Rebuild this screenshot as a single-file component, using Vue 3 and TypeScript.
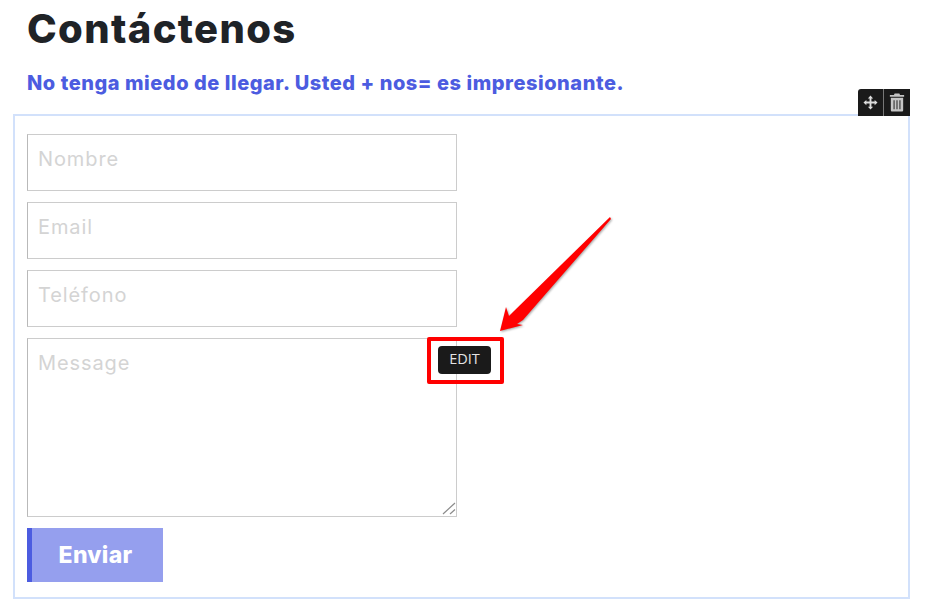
<script setup lang="ts">
const fields = ['Nombre', 'Email', 'Teléfono']
</script>

<template>
  <div class="page">
    <h1 class="title">Contáctenos</h1>
    <p class="subtitle">No tenga miedo de llegar. Usted + nos= es impresionante.</p>

    <section class="editor-box">
      <div class="toolbar">
        <span class="tool">
          <svg width="15" height="15" viewBox="0 0 16 16" fill="#dedede">
            <path d="M8 0.5 10.8 3.6H9V7H12.4V5.2L15.5 8 12.4 10.8V9H9V12.4H10.8L8 15.5 5.2 12.4H7V9H3.6V10.8L0.5 8 3.6 5.2V7H7V3.6H5.2Z" />
          </svg>
        </span>
        <span class="tool tool-trash">
          <svg width="16" height="19" viewBox="0 0 16 20" fill="#c6c6c6">
            <path d="M5.5 0.5H10.5L11.2 2H15.5V4H0.5V2H4.8ZM1.5 5H14.5V18.2C14.5 19 13.9 19.5 13.2 19.5H2.8C2.1 19.5 1.5 19 1.5 18.2ZM4.4 7.5V17H5.4V7.5ZM7.5 7.5V17H8.5V7.5ZM10.6 7.5V17H11.6V7.5Z" />
          </svg>
        </span>
      </div>

      <form class="contact-form" @submit.prevent>
        <input v-for="field in fields" :key="field" class="field" type="text" :placeholder="field" />
        <div class="message-wrap">
          <textarea class="field message" placeholder="Message"></textarea>
          <svg class="grip" width="14" height="14" viewBox="0 0 14 14" stroke="#8c8c8c" stroke-width="1.2" fill="none">
            <path d="M1 13 13 2M8 13 13 8.5" />
          </svg>
          <button type="button" class="edit-button">EDIT</button>
          <span class="edit-highlight"></span>
        </div>
        <button type="submit" class="send-button">Enviar</button>
      </form>
    </section>

    <!-- red annotation arrow pointing at the edit button -->
    <svg class="arrow" width="928" height="604" viewBox="0 0 928 604">
      <polygon points="610,217 611,219 523,320 517,324 523,325 500,331 506,307 509,316 513,312" fill="#ff0000" />
    </svg>
  </div>
</template>

<style>
html,
body {
  margin: 0;
  background: #fff;
}
</style>

<style scoped>
.page {
  position: relative;
  width: 928px;
  height: 604px;
  overflow: hidden;
  box-sizing: border-box;
  padding: 6px 18px 0 13px;
  font-family: Inter, "Liberation Sans", sans-serif;
}

.title {
  margin: 0 0 0 14px;
  font-size: 40px;
  line-height: 46px;
  font-weight: 800;
  letter-spacing: 1.35px;
  color: #1f2327;
}

.subtitle {
  margin: 17px 0 0 14px;
  font-size: 20px;
  line-height: 28px;
  font-weight: 800;
  letter-spacing: 0.54px;
  color: #4c5ce0;
}

.editor-box {
  position: relative;
  box-sizing: border-box;
  margin-top: 17px;
  height: 485px;
  border: 2px solid #d2e1fb;
  padding: 18px 12px;
}

.toolbar {
  position: absolute;
  top: -27px;
  right: -2px;
  display: flex;
  height: 27px;
  background: #1a1a1a;
  border-radius: 3px 0 0 0;
}

.tool {
  display: flex;
  align-items: center;
  justify-content: center;
  width: 25px;
}

.tool-trash {
  width: 26px;
  border-left: 1px solid #777;
}

.contact-form {
  display: flex;
  flex-direction: column;
  align-items: flex-start;
  gap: 11px;
}

.field {
  display: block;
  box-sizing: border-box;
  width: 430px;
  height: 57px;
  padding: 0 10px 8px;
  border: 1px solid #ccc;
  border-left-color: #b9b9b9;
  border-radius: 0;
  outline: none;
  background: #fff;
  font-family: inherit;
  font-size: 20px;
  letter-spacing: 0.9px;
  color: #333;
}

.field::placeholder {
  color: #d4d4d4;
  opacity: 1;
}

.message-wrap {
  position: relative;
}

.message {
  height: 179px;
  padding-top: 12px;
  resize: none;
}

.grip {
  position: absolute;
  right: 1px;
  bottom: 2px;
  pointer-events: none;
}

.edit-button {
  position: absolute;
  top: 8px;
  left: 411px;
  width: 53px;
  height: 28px;
  padding: 0 0 3px;
  border: none;
  border-radius: 4px;
  background: #1a1a1a;
  color: #e4e4e4;
  font-family: "Open Sans", sans-serif;
  font-size: 14.5px;
}

.edit-highlight {
  position: absolute;
  top: -1px;
  left: 400px;
  box-sizing: border-box;
  width: 77px;
  height: 47px;
  border: 4px solid #ff0000;
  border-radius: 2px;
  pointer-events: none;
}

.send-button {
  width: 136px;
  height: 54px;
  padding: 0 4px 0 0;
  border: none;
  border-left: 5px solid #4c5ce0;
  background: #959fee;
  color: #fff;
  font-family: inherit;
  font-size: 23px;
  font-weight: 800;
  letter-spacing: 0.3px;
}

.arrow {
  position: absolute;
  top: 0;
  left: 0;
  pointer-events: none;
  filter: drop-shadow(1px 1px 1px rgba(0, 0, 0, 0.35));
}
</style>
